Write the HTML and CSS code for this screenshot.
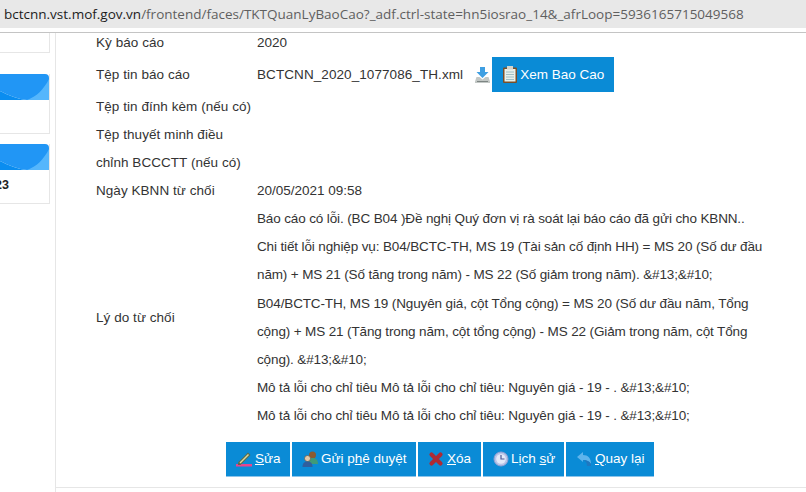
FILE: index.html
```
<!DOCTYPE html>
<html lang="vi">
<head>
<meta charset="utf-8">
<title>TKTQuanLyBaoCao</title>
<link rel="stylesheet" href="styles.css">
</head>
<body>
<header class="addressbar">
  <div class="url"><span class="host">bctcnn.vst.mof.gov.vn</span>/frontend/faces/TKTQuanLyBaoCao?_adf.ctrl-state=hn5iosrao_14&amp;_afrLoop=5936165715049568</div>
</header>
<div class="page">
  <aside class="side">
    <div class="card card-first"></div>
    <div class="card card-second">
      <div class="card-head"><svg class="swoosh" viewBox="0 0 50 26" preserveAspectRatio="none"><path d="M0 17C10 22 18 25 27 26H50V0H0Z" fill="#2196f5"/><path d="M0 17C10 22 18 25 27 26H0Z" fill="#0a8df0"/><path d="M27 26C37 23 45 14 50 3V26Z" fill="#55b6fc"/></svg></div>
    </div>
    <div class="card card-third">
      <div class="card-head"><svg class="swoosh" viewBox="0 0 50 26" preserveAspectRatio="none"><path d="M0 17C10 22 18 25 27 26H50V0H0Z" fill="#2196f5"/><path d="M0 17C10 22 18 25 27 26H0Z" fill="#0a8df0"/><path d="M27 26C37 23 45 14 50 3V26Z" fill="#55b6fc"/></svg></div>
      <div class="card-num"><span>23</span></div>
    </div>
  </aside>
  <main class="main">
    <div class="form">
      <div class="label row-a">Kỳ báo cáo</div>
      <div class="value row-a">2020</div>
      <div class="label row-b">Tệp tin báo cáo</div>
      <div class="value row-b file-row">
        <span class="file-name">BCTCNN_2020_1077086_TH.xml</span>
        <svg class="dl-icon" viewBox="0 0 15 16"><path d="M5 0h5v5h3.500L7.500 11 1.500 5H5Z" fill="#3f9fe2"/><path d="M1.500 10h3l3 2.500 3-2.500h3l1.500 4.500v1.500H0v-1.500Z" fill="#c3c8c6"/><path d="M2 14.500h11" stroke="#7d8583"/></svg>
        <button class="btn btn-view" type="button">
          <svg class="ico" viewBox="0 0 14 17"><rect x="0" y="1.500" width="14" height="15.500" rx="1" fill="#7b4f27"/><rect x="1.500" y="3" width="11" height="12.500" fill="#e8f1ec"/><rect x="4" y="0" width="6" height="3.500" fill="#d6d3c9"/><path d="M3 6h8M3 8.500h8M3 11h8M3 13.500h8" stroke="#9fc0c4"/></svg>
          <span>Xem Bao Cao</span>
        </button>
      </div>
      <div class="label row-c">Tệp tin đính kèm (nếu có)</div>
      <div class="value row-c"></div>
      <div class="label label-two">Tệp thuyết minh điều<br>chỉnh BCCCTT (nếu có)</div>
      <div class="value label-two"></div>
      <div class="label row-c">Ngày KBNN từ chối</div>
      <div class="value row-c">20/05/2021 09:58</div>
      <div class="label reason-label">Lý do từ chối</div>
      <div class="value reason">
        Báo cáo có lỗi. (BC B04 )Đề nghị Quý đơn vị rà soát lại báo cáo đã gửi cho KBNN..<br>
        Chi tiết lỗi nghiệp vụ: B04/BCTC-TH, MS 19 (Tài sản cố định HH) = MS 20 (Số dư đầu<br>
        năm) + MS 21 (Số tăng trong năm) - MS 22 (Số giảm trong năm). &amp;#13;&amp;#10;<br>
        B04/BCTC-TH, MS 19 (Nguyên giá, cột Tổng cộng) = MS 20 (Số dư đầu năm, Tổng<br>
        cộng) + MS 21 (Tăng trong năm, cột tổng cộng) - MS 22 (Giảm trong năm, cột Tổng<br>
        cộng). &amp;#13;&amp;#10;<br>
        Mô tả lỗi cho chỉ tiêu Mô tả lỗi cho chỉ tiêu: Nguyên giá - 19 - . &amp;#13;&amp;#10;<br>
        Mô tả lỗi cho chỉ tiêu Mô tả lỗi cho chỉ tiêu: Nguyên giá - 19 - . &amp;#13;&amp;#10;
      </div>
    </div>
    <div class="actions">
      <button class="btn btn-act" type="button">
        <svg class="ico-act" viewBox="0 0 16 16"><rect x="0" y="13" width="16" height="2.500" fill="#e8458f"/><path d="M2 11.500 12 1.500l2.500 2.500-10 10H2Z" fill="#5d6b4a"/><path d="M3.500 11.500 12 3l1 1-8.500 8.500Z" fill="#d8d9a0"/></svg>
        <span><u>S</u>ửa</span>
      </button>
      <button class="btn btn-act" type="button">
        <svg class="ico-act" viewBox="0 0 16 16"><circle cx="10.500" cy="4" r="3.500" fill="#8a5a30"/><path d="M5 13c0-4 2-6 5.500-6S16 9 16 13Z" fill="#3f9a78"/><circle cx="5.500" cy="7.500" r="3" fill="#e3c8a8" stroke="#5b4a3a" stroke-width=".6"/><path d="M0.500 16c0-4 2-5.500 5-5.500s5 1.500 5 5.500Z" fill="#2f5f9e"/></svg>
        <span>Gửi p<u>h</u>ê duyệt</span>
      </button>
      <button class="btn btn-act" type="button">
        <svg class="ico-act" viewBox="0 0 16 16"><path d="M3.500 3.500l9 9M12.500 3.500l-9 9" stroke="#ad2a34" stroke-width="4.200" stroke-linecap="round"/></svg>
        <span><u>X</u>óa</span>
      </button>
      <button class="btn btn-act" type="button">
        <svg class="ico-act" viewBox="0 0 16 16"><circle cx="8" cy="8" r="7" fill="#b9c4e8" stroke="#8f9fd2"/><circle cx="8" cy="8" r="4.800" fill="#e4e9f8"/><path d="M8 4v4h3.500" stroke="#4c5a96" stroke-width="1.200" fill="none"/></svg>
        <span>Lịch <u>s</u>ử</span>
      </button>
      <button class="btn btn-act" type="button">
        <svg class="ico-act" viewBox="0 0 16 16"><path d="M1 6 7 1v3c5 0 8 3 8 9-2-3-4-4-8-4v2Z" fill="#5eb4ec"/><path d="M7 9c4 0 6 1 8 4v2h-4c0-3-1-5-4-6Z" fill="#1f78c0"/></svg>
        <span><u>Q</u>uay lại</span>
      </button>
    </div>
  </main>
</div>
</body>
</html>
```
FILE: styles.css
```
* { box-sizing: border-box; }
html, body { margin: 0; padding: 0; }
body {
  width: 806px;
  height: 492px;
  overflow: hidden;
  background: #fff;
  font-family: "Liberation Sans", Arial, sans-serif;
  font-size: 13.5px;
  color: #333;
}
.addressbar {
  height: 33px;
  background: #fff;
  border-bottom: 1px solid #c4c4c4;
}
.url {
  height: 28px;
  padding-left: 4px;
  background: #e8e8e8;
  color: #5f5f5f;
  font-family: "Open Sans", sans-serif;
  font-size: 13.5px;
  line-height: 28px;
  white-space: nowrap;
}
.host { color: #1c1c1c; }
.page {
  display: flex;
  height: 459px;
}
.side {
  flex: none;
  width: 56px;
  padding-right: 6px;
  border-right: 1px solid #e6e6e6;
  display: flex;
  flex-direction: column;
}
.card {
  width: 50px;
  background: #fff;
  border: 1px solid #e6e6e6;
  border-left: 0;
  border-top: 0;
}
.card-first { height: 20px; }
.card-second { height: 60px; margin-top: 21px; }
.card-third { height: 60px; margin-top: 10px; }
.card-head {
  height: 26px;
  border-top-right-radius: 4px;
  overflow: hidden;
}
.swoosh { display: block; width: 50px; height: 26px; }
.card-num {
  display: flex;
  justify-content: flex-end;
  width: 9px;
  font-weight: bold;
  font-size: 12.5px;
  line-height: 30px;
  color: #222;
  white-space: nowrap;
}
.card-num span { flex: none; }
.main {
  flex: 1;
  min-width: 0;
  padding-left: 40px;
  border-bottom: 1px solid #e6e6e6;
  height: 455px;
}
.form {
  display: grid;
  grid-template-columns: 161px 1fr;
}
.label, .value {
  display: flex;
  align-items: center;
  white-space: nowrap;
}
.label { letter-spacing: 0.05px; }
.row-a { height: 18px; }
.row-b { height: 41px; padding-top: 6px; }
.row-c { height: 28px; }
.label-two {
  display: block;
  line-height: 28px;
  height: 56px;
  padding-top: 1px;
}
.file-name { letter-spacing: 0.08px; }
.dl-icon { width: 15px; height: 16px; flex: none; margin-left: 12px; margin-right: 2px; }
.btn {
  display: inline-flex;
  align-items: center;
  border: 0;
  margin: 0;
  padding: 0;
  background: #0a8bd6;
  color: #fff;
  font-family: "Liberation Sans", Arial, sans-serif;
  font-size: 13.5px;
  white-space: nowrap;
}
.btn-view {
  height: 35px;
  width: 122px;
  padding-left: 11px;
  gap: 3px;
}
.ico { width: 14px; height: 17px; flex: none; }
.reason {
  display: block;
  line-height: 28.200px;
  letter-spacing: -0.13px;
  padding-top: 1px;
}
.actions {
  display: flex;
  gap: 2px;
  padding-left: 130px;
  margin-top: 11px;
}
.btn-act {
  height: 35px;
  padding: 0 0 0 10px;
  gap: 3px;
  border-bottom: 1px solid #8cc4ea;
}
.btn-act:nth-child(1) { width: 64px; }
.btn-act:nth-child(2) { width: 124px; }
.btn-act:nth-child(3) { width: 63px; }
.btn-act:nth-child(4) { width: 81px; gap: 2px; }
.btn-act:nth-child(5) { width: 88px; }
.ico-act { width: 16px; height: 16px; flex: none; }
```
